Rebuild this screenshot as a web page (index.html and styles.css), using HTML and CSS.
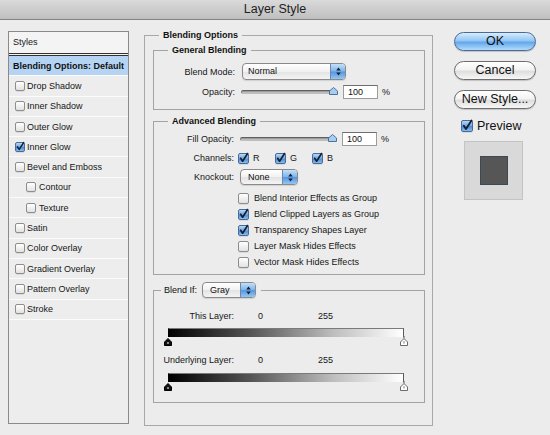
FILE: index.html
```html
<!DOCTYPE html>
<html>
<head>
<meta charset="utf-8">
<title>Layer Style</title>
<link rel="stylesheet" href="styles.css">
</head>
<body>
<div class="titlebar">Layer Style</div>
<div class="content">
  <div class="styles-list">
    <div class="list-header">Styles</div>
    <div class="list-item selected">Blending Options: Default</div>
    <div class="list-item"><span class="cb"></span>Drop Shadow</div>
    <div class="list-item"><span class="cb"></span>Inner Shadow</div>
    <div class="list-item"><span class="cb"></span>Outer Glow</div>
    <div class="list-item"><span class="cb checked"><svg viewBox="0 0 10 10"><path d="M1.8 4.8 L4 8 L9.5 -0.5"/></svg></span>Inner Glow</div>
    <div class="list-item"><span class="cb"></span>Bevel and Emboss</div>
    <div class="list-item indent"><span class="cb"></span>Contour</div>
    <div class="list-item indent"><span class="cb"></span>Texture</div>
    <div class="list-item"><span class="cb"></span>Satin</div>
    <div class="list-item"><span class="cb"></span>Color Overlay</div>
    <div class="list-item"><span class="cb"></span>Gradient Overlay</div>
    <div class="list-item"><span class="cb"></span>Pattern Overlay</div>
    <div class="list-item"><span class="cb"></span>Stroke</div>
  </div>

  <fieldset class="group outer">
    <legend>Blending Options</legend>
    <div class="outer-body">
      <fieldset class="group general">
        <legend>General Blending</legend>
        <div class="general-body">
          <div class="row">
            <span class="lbl">Blend Mode:</span>
            <div class="popup w-mode"><span class="val">Normal</span><span class="arr"><svg width="5" height="9" viewBox="0 0 5 9"><path d="M2.5 0.6 L4.8 3.6 L0.2 3.6Z M2.5 8.4 L4.8 5.4 L0.2 5.4Z"/></svg></span></div>
          </div>
          <div class="row row-gap5">
            <span class="lbl">Opacity:</span>
            <div class="slider"><span class="track"></span><svg class="sthumb" width="9" height="8" viewBox="0 0 9 8"><path d="M0.5 7.5 L0.5 4 L4.5 0.5 L8.5 4 L8.5 7.5Z"/></svg></div>
            <span class="num">100</span>
            <span class="pct">%</span>
          </div>
        </div>
      </fieldset>

      <fieldset class="group advanced">
        <legend>Advanced Blending</legend>
        <div class="advanced-body">
          <div class="row">
            <span class="lbl lbl-adv">Fill Opacity:</span>
            <div class="slider"><span class="track"></span><svg class="sthumb" width="9" height="8" viewBox="0 0 9 8"><path d="M0.5 7.5 L0.5 4 L4.5 0.5 L8.5 4 L8.5 7.5Z"/></svg></div>
            <span class="num">100</span>
            <span class="pct">%</span>
          </div>
          <div class="row row-chan">
            <span class="lbl lbl-adv">Channels:</span>
            <div class="chans">
              <span class="chan"><span class="cb cb11 checked"><svg viewBox="0 0 10 10"><path d="M1.8 4.8 L4 8 L9.5 -0.5"/></svg></span>R</span>
              <span class="chan"><span class="cb cb11 checked"><svg viewBox="0 0 10 10"><path d="M1.8 4.8 L4 8 L9.5 -0.5"/></svg></span>G</span>
              <span class="chan"><span class="cb cb11 checked"><svg viewBox="0 0 10 10"><path d="M1.8 4.8 L4 8 L9.5 -0.5"/></svg></span>B</span>
            </div>
          </div>
          <div class="row row-knock">
            <span class="lbl lbl-adv">Knockout:</span>
            <div class="popup w-knock"><span class="val">None</span><span class="arr"><svg width="5" height="9" viewBox="0 0 5 9"><path d="M2.5 0.6 L4.8 3.6 L0.2 3.6Z M2.5 8.4 L4.8 5.4 L0.2 5.4Z"/></svg></span></div>
          </div>
          <div class="checklist">
            <div class="check-row"><span class="cb cb11"></span>Blend Interior Effects as Group</div>
            <div class="check-row"><span class="cb cb11 checked"><svg viewBox="0 0 10 10"><path d="M1.8 4.8 L4 8 L9.5 -0.5"/></svg></span>Blend Clipped Layers as Group</div>
            <div class="check-row"><span class="cb cb11 checked"><svg viewBox="0 0 10 10"><path d="M1.8 4.8 L4 8 L9.5 -0.5"/></svg></span>Transparency Shapes Layer</div>
            <div class="check-row"><span class="cb cb11"></span>Layer Mask Hides Effects</div>
            <div class="check-row"><span class="cb cb11"></span>Vector Mask Hides Effects</div>
          </div>
        </div>
      </fieldset>

      <fieldset class="group blendif">
        <legend><span class="bi-label">Blend If:</span><span class="popup w-gray"><span class="val">Gray</span><span class="arr"><svg width="5" height="9" viewBox="0 0 5 9"><path d="M2.5 0.6 L4.8 3.6 L0.2 3.6Z M2.5 8.4 L4.8 5.4 L0.2 5.4Z"/></svg></span></span></legend>
        <div class="blendif-body">
          <div class="lrow"><span class="lbl2">This Layer:</span><span class="v0">0</span><span class="v255">255</span></div>
          <div class="gbar"></div>
          <div class="gthumbs">
            <svg width="8" height="8" viewBox="0 0 8 8"><path class="tb" d="M0.5 7.5 L0.5 4 L4 0.5 L7.5 4 L7.5 7.5Z"/><path class="tbm" d="M4 4 L4 6"/></svg>
            <svg class="rthumb" width="8" height="8" viewBox="0 0 8 8"><path class="tl" d="M4 -2 L4 0.5"/><path class="tw" d="M0.5 7.5 L0.5 4 L4 0.5 L7.5 4 L7.5 7.5Z"/><path class="twm" d="M4 3.2 L4 5.5"/></svg>
          </div>
          <div class="lrow lrow2"><span class="lbl2">Underlying Layer:</span><span class="v0">0</span><span class="v255">255</span></div>
          <div class="gbar gbar2"></div>
          <div class="gthumbs">
            <svg width="8" height="8" viewBox="0 0 8 8"><path class="tb" d="M0.5 7.5 L0.5 4 L4 0.5 L7.5 4 L7.5 7.5Z"/><path class="tbm" d="M4 4 L4 6"/></svg>
            <svg class="rthumb" width="8" height="8" viewBox="0 0 8 8"><path class="tl" d="M4 -2 L4 0.5"/><path class="tw" d="M0.5 7.5 L0.5 4 L4 0.5 L7.5 4 L7.5 7.5Z"/><path class="twm" d="M4 3.2 L4 5.5"/></svg>
          </div>
        </div>
      </fieldset>
    </div>
  </fieldset>

  <div class="side">
    <div class="btn default">OK</div>
    <div class="btn">Cancel</div>
    <div class="btn">New Style...</div>
    <div class="preview-row"><span class="cb cb12 checked"><svg viewBox="0 0 10 10"><path d="M1.8 4.8 L4 8 L9.5 -0.5"/></svg></span>Preview</div>
    <div class="preview-box"><div class="preview-swatch"></div></div>
  </div>
</div>
</body>
</html>
```
FILE: styles.css
```css
* { box-sizing: border-box; }
html, body { margin: 0; padding: 0; }
body {
  width: 550px;
  height: 435px;
  overflow: hidden;
  background: #ececec;
  font-family: "Liberation Sans", Arial, sans-serif;
  font-size: 9px;
  color: #161616;
}

.titlebar {
  height: 20px;
  border-bottom: 1px solid #848484;
  background: linear-gradient(#dadada, #bfbfbf);
  text-align: center;
  font-size: 12.5px;
  line-height: 19px;
  color: #1e1e1e;
}

.content {
  display: flex;
  align-items: flex-start;
  padding: 10px 0 0 8px;
}

/* Styles list */
.styles-list {
  flex: none;
  width: 121px;
  height: 393px;
  margin-top: 1px;
  border: 1px solid #8a8a8a;
  background: #ededed;
}
.list-header {
  height: 24px;
  line-height: 21px;
  padding-left: 4px;
  background: #f4f4f4;
  border-bottom: 3px double #333;
}
.list-item {
  display: flex;
  align-items: center;
  height: 20.3px;
  padding-left: 6px;
  border-bottom: 1px solid #fbfbfb;
  white-space: nowrap;
}
.list-item.selected {
  background: #b5d4f4;
  font-weight: bold;
  padding-left: 4px;
  color: #111;
}
.list-item.indent { padding-left: 17px; }
.list-item .cb { margin-right: 2px; }
.list-item.indent .cb { margin-right: 3px; }

/* Checkbox */
.cb {
  flex: none;
  display: inline-block;
  position: relative;
  width: 10px;
  height: 10px;
  border: 1px solid #8d8d8d;
  border-radius: 2px;
  background: linear-gradient(#ffffff, #e2e2e2);
  box-shadow: 0 1px 0 rgba(0,0,0,0.08);
}
.cb.cb11 { width: 11px; height: 11px; }
.cb.cb12 { width: 12px; height: 12px; }
.cb.checked {
  background: linear-gradient(#b7d7f7, #6fa6e3 50%, #4d8ed9 55%, #86bdf0);
  border-color: #4a6a98;
}
.cb svg {
  display: block;
  width: 100%;
  height: 100%;
  overflow: visible;
}
.cb svg path {
  fill: none;
  stroke: #15202e;
  stroke-width: 1.9;
  stroke-linecap: round;
  stroke-linejoin: round;
}

/* Fieldsets */
fieldset.group {
  margin: 0;
  padding: 0;
  min-width: 0;
  border: 1px solid #a3a3a3;
}
fieldset.group > legend {
  margin-left: 14px;
  padding: 0 4px;
  font-weight: bold;
  line-height: 11px;
  font-size: 9px;
  color: #111;
}
fieldset.group.outer {
  flex: none;
  width: 289px;
  margin-left: 15px;
  border-color: #a8a8a8;
}
.outer-body { padding: 4px 7px 22px 8px; }

.general-body { padding: 7px 0 10px 0; }
fieldset.group.advanced { margin-top: 6px; }
.advanced-body { padding: 5px 0 4px 0; }

.row {
  display: flex;
  align-items: center;
  height: 14px;
}
.general-body .row:first-child { height: 17px; }
.row-gap5 { margin-top: 5px; }
.row-chan { margin-top: 6px; height: 12px; }
.row-knock { margin-top: 5px; height: 16px; }

.lbl {
  flex: none;
  width: 81px;
  margin-right: 6px;
  text-align: right;
  white-space: nowrap;
}
.lbl.lbl-adv { width: 80px; margin-right: 6px; }

/* Popup menus */
.popup {
  flex: none;
  display: flex;
  height: 17px;
  border: 1px solid #8a8a8a;
  border-radius: 4px;
  overflow: hidden;
  background: linear-gradient(#ffffff, #f1f1f1 50%, #e3e3e3 52%, #f4f4f4);
  box-shadow: 0 1px 1px rgba(0,0,0,0.12);
}
.popup .val {
  flex: 1;
  padding-left: 5px;
  line-height: 15px;
  color: #111;
}
.popup .arr {
  flex: none;
  width: 15px;
  display: flex;
  align-items: center;
  justify-content: center;
  border-left: 1px solid #6a88b0;
  background: linear-gradient(#c4e0fa, #7fb5ea 48%, #5596de 52%, #93c6f3);
}
.popup .arr svg path { fill: #14203a; }
.w-mode { width: 104px; margin-left: 1px; }
.w-knock { width: 58px; height: 16px; }
.w-knock .val { line-height: 14px; padding-left: 7px; }
.w-gray { width: 54px; height: 16px; margin-left: 5px; }
.w-gray .val { line-height: 14px; padding-left: 7px; font-weight: normal; }

/* Slider */
.slider {
  flex: none;
  width: 97px;
  height: 14px;
  display: flex;
  align-items: center;
}
.track {
  flex: 1;
  height: 4px;
  border: 1px solid #7c7c7c;
  border-color: #616161 #9a9a9a #bdbdbd #7a7a7a;
  border-radius: 2px;
  background: linear-gradient(#8a8a8a, #cfcfcf);
}
.sthumb {
  flex: none;
  margin-left: -3px;
  margin-top: -2px;
}
.sthumb path {
  fill: #a6cdf2;
  stroke: #50709c;
  stroke-width: 1;
}
.num {
  flex: none;
  width: 35px;
  height: 14px;
  margin-left: 5px;
  padding-left: 4px;
  line-height: 12px;
  background: #fff;
  border: 1px solid #9c9c9c;
  border-top-color: #6e6e6e;
  color: #111;
}
.pct { margin-left: 4px; }

/* Channels */
.chans {
  display: flex;
  margin-left: -2px;
}
.chan {
  display: flex;
  align-items: center;
  width: 37px;
}
.chan .cb { margin-right: 4px; }

/* Check list */
.checklist {
  margin-top: 5px;
  padding-left: 84px;
}
.check-row {
  display: flex;
  align-items: center;
  height: 16px;
  white-space: nowrap;
}
.check-row .cb { margin-right: 5px; }

/* Blend If */
fieldset.group.blendif { margin-top: 7px; }
fieldset.group.blendif > legend {
  margin-left: 7px;
  padding: 0 5px 0 3px;
  font-weight: normal;
  line-height: 16px;
  display: flex;
  align-items: center;
}
.blendif-body { padding: 13px 0 11px 0; }
.lrow {
  display: flex;
  height: 11px;
  line-height: 11px;
  white-space: nowrap;
}
.lrow2 { margin-top: 9px; }
.lbl2 {
  flex: none;
  width: 80px;
  text-align: right;
}
.v0 {
  flex: none;
  width: 60px;
  margin-left: 24px;
}
.gbar {
  width: 236px;
  height: 9px;
  margin: 6px 0 0 14px;
  background: linear-gradient(to right, #000 0%, #555 35%, #bdbdbd 70%, #fff 100%);
  border-top: 1px solid #7a7a7a;
  border-left: 1px solid #000;
  border-right: 1px solid #5a5a5a;
}
.gbar.gbar2 { margin-top: 7px; }
.gthumbs {
  display: flex;
  justify-content: space-between;
  width: 244px;
  height: 8px;
  margin: 1px 0 0 10px;
}
.gthumbs svg { overflow: visible; display: block; }
.tb { fill: #111; stroke: #000; stroke-width: 1; }
.tbm { stroke: #fff; stroke-width: 1; }
.tw { fill: #fff; stroke: #6a6a6a; stroke-width: 1; }
.twm { stroke: #777; stroke-width: 1; }
.tl { stroke: #5a5a5a; stroke-width: 1; }

/* Side */
.side {
  flex: none;
  width: 82px;
  margin-left: 21px;
  margin-top: 2px;
  display: flex;
  flex-direction: column;
}
.btn {
  height: 19px;
  margin-bottom: 10px;
  border: 1px solid #6d6d6d;
  border-radius: 10px;
  background: linear-gradient(#ffffff, #f3f3f3 45%, #dedede 55%, #f7f7f7);
  box-shadow: 0 1px 1px rgba(0,0,0,0.18);
  text-align: center;
  font-size: 12.5px;
  line-height: 17px;
  color: #111;
}
.btn.default {
  border-color: #4a6b9a;
  background: linear-gradient(#d8ecfd, #93c6f3 45%, #62a8ec 55%, #b3dbfb);
}
.btn:nth-child(3) { margin-bottom: 0; }
.preview-row {
  display: flex;
  align-items: center;
  height: 12px;
  margin-top: 11px;
  padding-left: 7px;
  font-size: 12.5px;
  color: #111;
}
.preview-row .cb { margin-right: 4px; }
.preview-box {
  width: 59px;
  height: 59px;
  margin: 9px 0 0 10px;
  background: #d9d9d9;
  border: 1px solid #c3c3c3;
  display: flex;
  align-items: center;
  justify-content: center;
}
.preview-swatch {
  width: 28px;
  height: 29px;
  background: #565656;
  border: 1px solid #3b4b56;
}
```
